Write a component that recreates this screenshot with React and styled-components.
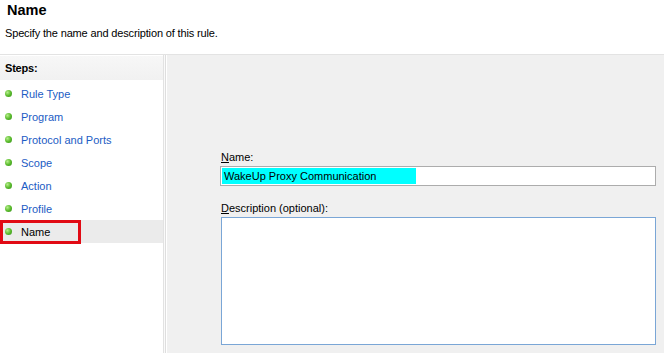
import React from "react";
import styled, { createGlobalStyle } from "styled-components";

const Global = createGlobalStyle`
  html, body { margin: 0; padding: 0; background: #ffffff; }
  body { font-family: "Segoe UI", "Liberation Sans", Arial, sans-serif; color: #000; }
  #root { width: 664px; height: 353px; overflow: hidden; }
`;

const Page = styled.div`
  width: 664px;
  height: 353px;
  display: flex;
  flex-direction: column;
  background: #fff;
`;

const Header = styled.header`
  height: 55px;
  border-bottom: 1px solid #e3e3e3;
  padding: 2px 0 0 5px;
  box-sizing: border-box;
  flex: none;
`;

const Title = styled.h1`
  margin: 0 0 0 2px;
  font-size: 14.5px;
  line-height: 17px;
  font-weight: bold;
`;

const Subtitle = styled.p`
  margin: 7px 0 0 0;
  font-size: 11px;
  line-height: 14px;
  letter-spacing: -0.15px;
`;

const Body = styled.div`
  flex: 1;
  display: flex;
  min-height: 0;
`;

const Steps = styled.nav`
  width: 163px;
  flex: none;
  background: #fff;
  border-right: 1px solid #e2e2e2;
  box-shadow: 1px 0 0 #fafafa, 2px 0 0 #dedede;
  margin-right: 3px;
  padding-top: 1px;
`;

const StepsHeader = styled.div`
  height: 24px;
  display: flex;
  align-items: center;
  padding-left: 5px;
  background: linear-gradient(#f7f7f7, #f1f1f1);
  font-size: 11px;
  font-weight: bold;
  letter-spacing: -0.2px;
`;

const StepList = styled.ul`
  list-style: none;
  margin: 0;
  padding: 2px 0 0 0;
`;

const Step = styled.li`
  position: relative;
  height: 23px;
  display: flex;
  align-items: center;
  gap: 9px;
  padding-left: 5px;
  font-size: 11px;
  color: ${(p) => (p.$active ? "#000" : "#1c5cc4")};
  background: ${(p) => (p.$active ? "#ebebeb" : "transparent")};
`;

const Bullet = styled.span`
  width: 7px;
  height: 7px;
  border-radius: 50%;
  background: radial-gradient(circle at 35% 35%, #b6ee8c 0%, #5cbc2e 50%, #2f8a16 100%);
  flex: none;
`;

const Highlight = styled.span`
  position: absolute;
  left: 0;
  top: 0;
  width: 81px;
  height: 24px;
  border: 3px solid #e10a14;
  box-sizing: border-box;
`;

const Content = styled.main`
  flex: 1;
  background: #f0f0f0;
  padding: 96px 8px 0 53px;
  display: flex;
  flex-direction: column;
`;

const Label = styled.label`
  font-size: 11px;
  line-height: 13px;
  margin-bottom: 2px;
  padding-left: 1px;
`;

const NameBox = styled.div`
  height: 20px;
  border: 1px solid #acacac;
  background: #fff;
  display: flex;
  padding: 1px 0 1px 1px;
  box-sizing: border-box;
  margin-bottom: 16px;
`;

const Selected = styled.span`
  background: #00ffff;
  width: 194px;
  display: flex;
  align-items: center;
  padding-left: 2px;
  font-size: 11px;
  box-sizing: border-box;
`;

const DescBox = styled.div`
  height: 126px;
  border: 1px solid #7aa6d6;
  background: #fff;
  margin-left: 1px;
`;

const steps = ["Rule Type", "Program", "Protocol and Ports", "Scope", "Action", "Profile", "Name"];

export default function App() {
  return (
    <Page>
      <Global />
      <Header>
        <Title>Name</Title>
        <Subtitle>Specify the name and description of this rule.</Subtitle>
      </Header>
      <Body>
        <Steps>
          <StepsHeader>Steps:</StepsHeader>
          <StepList>
            {steps.map((s) => (
              <Step key={s} $active={s === "Name"}>
                <Bullet />
                {s}
                {s === "Name" && <Highlight />}
              </Step>
            ))}
          </StepList>
        </Steps>
        <Content>
          <Label><u>N</u>ame:</Label>
          <NameBox>
            <Selected>WakeUp Proxy Communication</Selected>
          </NameBox>
          <Label><u>D</u>escription (optional):</Label>
          <DescBox />
        </Content>
      </Body>
    </Page>
  );
}
